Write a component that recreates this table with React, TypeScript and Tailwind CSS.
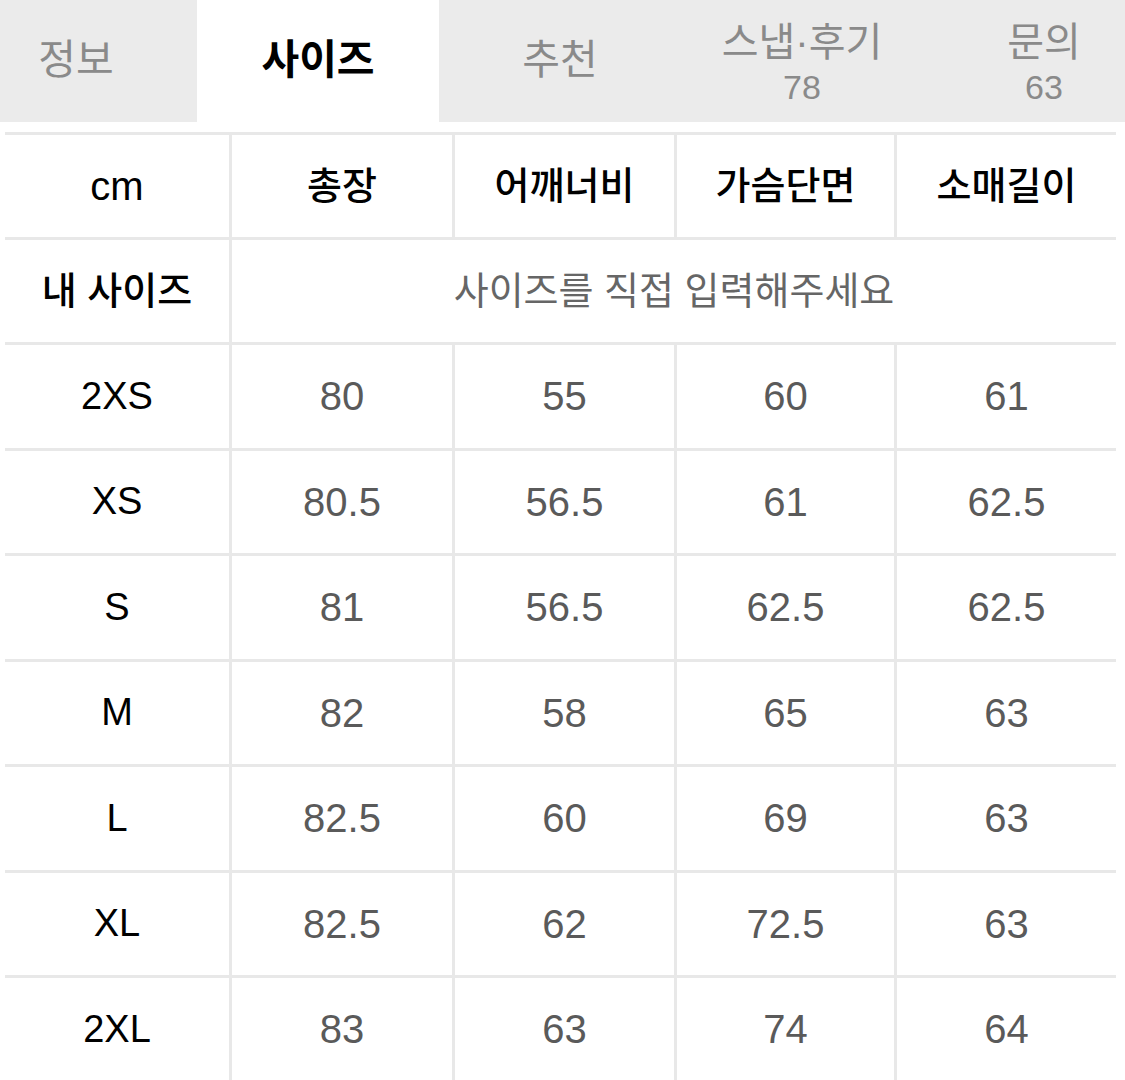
import React from "react";

const font = { fontFamily: '"Liberation Sans", "Noto Sans CJK KR", sans-serif' };

const cols = ["총장", "어깨너비", "가슴단면", "소매길이"];
const widths = ["w-[223px]", "w-[222px]", "w-[220px]", "flex-1"];
const rows: [string, string[]][] = [
  ["2XS", ["80", "55", "60", "61"]],
  ["XS", ["80.5", "56.5", "61", "62.5"]],
  ["S", ["81", "56.5", "62.5", "62.5"]],
  ["M", ["82", "58", "65", "63"]],
  ["L", ["82.5", "60", "69", "63"]],
  ["XL", ["82.5", "62", "72.5", "63"]],
  ["2XL", ["83", "63", "74", "64"]],
];

export default function App() {
  return (
    <div className="w-[1125px] h-[1080px] bg-white overflow-hidden" style={font}>
      <div className="h-[122px] bg-[#ebebeb] flex ml-[-45px]">
        <div className="w-[242px] shrink-0 flex items-center justify-center text-[41px] text-[#8a8a8a]">정보</div>
        <div className="w-[242px] shrink-0 bg-white flex items-center justify-center text-[41px] font-bold text-black">사이즈</div>
        <div className="w-[242px] shrink-0 flex items-center justify-center text-[41px] text-[#8a8a8a]">추천</div>
        <div className="w-[242px] shrink-0 flex flex-col items-center pt-[19px] text-[#8a8a8a]">
          <div className="text-[40px] leading-[46px]">스냅·후기</div>
          <div className="text-[34px] leading-[36px] mt-[4px]">78</div>
        </div>
        <div className="w-[242px] shrink-0 flex flex-col items-center pt-[19px] text-[#8a8a8a]">
          <div className="text-[40px] leading-[46px]">문의</div>
          <div className="text-[34px] leading-[36px] mt-[4px]">63</div>
        </div>
      </div>
      <div className="mt-[10px] ml-[5px] w-[1111px] border-t-[3px] border-[#e8e8e8]">
        <div className="flex h-[105px]">
          <div className="w-[227px] border-r-[3px] border-b-[3px] border-[#e8e8e8] flex items-center justify-center text-[40px] font-medium text-black">cm</div>
          {cols.map((c, i) => (
            <div key={c} className={`${widths[i]} border-b-[3px] border-[#e8e8e8] flex items-center justify-center text-[38px] font-medium text-black ${i < 3 ? "border-r-[3px]" : ""}`}>{c}</div>
          ))}
        </div>
        <div className="flex h-[105px]">
          <div className="w-[227px] border-r-[3px] border-b-[3px] border-[#e8e8e8] flex items-center justify-center text-[38px] font-medium text-black">내 사이즈</div>
          <div className="flex-1 border-b-[3px] border-[#e8e8e8] flex items-center justify-center text-[38px] text-[#666]">사이즈를 직접 입력해주세요</div>
        </div>
        {rows.map(([label, vals]) => (
          <div key={label} className="flex h-[105.5px]">
            <div className="w-[227px] border-r-[3px] border-b-[3px] border-[#e8e8e8] flex items-center justify-center text-[38px] text-black">{label}</div>
            {vals.map((v, i) => (
              <div key={i} className={`${widths[i]} border-b-[3px] border-[#e8e8e8] flex items-center justify-center text-[40px] text-[#5a5a5a] ${i < 3 ? "border-r-[3px]" : ""}`}>{v}</div>
            ))}
          </div>
        ))}
      </div>
    </div>
  );
}
